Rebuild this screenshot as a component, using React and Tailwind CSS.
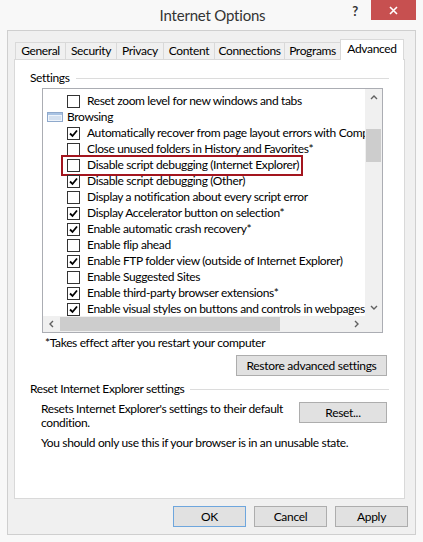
import { useState } from "react";

const ROWS = [
  { label: "Reset zoom level for new windows and tabs", checked: false },
  { label: "Browsing", group: true },
  { label: "Automatically recover from page layout errors with Compatibility View", checked: true },
  { label: "Close unused folders in History and Favorites*", checked: false },
  { label: "Disable script debugging (Internet Explorer)", checked: false, highlight: true },
  { label: "Disable script debugging (Other)", checked: true },
  { label: "Display a notification about every script error", checked: false },
  { label: "Display Accelerator button on selection*", checked: true },
  { label: "Enable automatic crash recovery*", checked: true },
  { label: "Enable flip ahead", checked: false },
  { label: "Enable FTP folder view (outside of Internet Explorer)", checked: true },
  { label: "Enable Suggested Sites", checked: false },
  { label: "Enable third-party browser extensions*", checked: true },
  { label: "Enable visual styles on buttons and controls in webpages", checked: true },
];

const TABS = [
  { label: "General", w: "w-[51px]" },
  { label: "Security", w: "w-[51px]" },
  { label: "Privacy", w: "w-[47px]" },
  { label: "Content", w: "w-[51px]" },
  { label: "Connections", w: "w-[70px]" },
  { label: "Programs", w: "w-[56px]" },
];

function Checkbox({ checked }) {
  return (
    <span className="w-[13px] h-[13px] shrink-0 border border-[#333] bg-white flex items-center justify-center">
      {checked && (
        <svg width="11" height="11" viewBox="0 0 11 11">
          <path d="M2 5.5 L4.5 8 L9 2.5" fill="none" stroke="#000" strokeWidth="1.8" />
        </svg>
      )}
    </span>
  );
}

function GroupIcon() {
  return (
    <svg width="16" height="10" viewBox="0 0 16 10" className="shrink-0">
      <rect x="0.5" y="0.5" width="15" height="9" fill="#eef4fb" stroke="#8fa9cc" />
      <rect x="1" y="1" width="14" height="2" fill="#a9c3e3" />
      <line x1="2" y1="5" x2="14" y2="5" stroke="#b9cce4" />
      <line x1="2" y1="7" x2="14" y2="7" stroke="#b9cce4" />
    </svg>
  );
}

function Chevron({ dir }) {
  const d = {
    up: "M1 5 L4 2 L7 5",
    down: "M1 2 L4 5 L7 2",
    left: "M5 1 L2 4 L5 7",
    right: "M2 1 L5 4 L2 7",
  }[dir];
  const vertical = dir === "up" || dir === "down";
  return (
    <svg width={vertical ? 8 : 7} height={vertical ? 7 : 8} viewBox={vertical ? "0 0 8 7" : "0 0 7 8"}>
      <path d={d} fill="none" stroke="#606060" strokeWidth="1.4" />
    </svg>
  );
}

function Button({ children, className = "", primary }) {
  return (
    <button
      className={`h-[21px] text-[12px] tracking-[-0.3px] text-black bg-[#e1e1e1] border ${primary ? "border-[#6ea6dd]" : "border-[#adadad]"} flex items-center justify-center ${className}`}
    >
      {children}
    </button>
  );
}

function GroupHeader({ label }) {
  return (
    <div className="flex items-center h-[16px] pl-[15px] pr-[15px] gap-[6px]">
      <span className="shrink-0">{label}</span>
      <span className="flex-1 h-px bg-[#dcdcdc]" />
    </div>
  );
}

export default function App() {
  const [tab] = useState("Advanced");

  return (
    <div className="w-[423px] h-[542px] bg-[#f8f8f8] font-['Segoe_UI','Lato',sans-serif] text-[12px] tracking-[-0.35px] text-black leading-[16px] flex flex-col overflow-hidden">
      {/* title bar */}
      <div className="h-[30px] flex items-start shrink-0">
        <div className="flex-1 pl-[78px] pt-[5px] text-center text-[15px] tracking-[-0.2px] leading-[20px] text-[#333]">Internet Options</div>
        <div className="w-[16px] pt-[3px] text-[13px] font-bold text-[#333] text-center mr-[8px]">?</div>
        <div className="w-[45px] h-[20px] bg-[#c75050] flex items-center justify-center mr-[7px]">
          <svg width="9" height="9" viewBox="0 0 9 9">
            <path d="M1 1 L8 8 M8 1 L1 8" stroke="#fff" strokeWidth="1.6" />
          </svg>
        </div>
      </div>

      {/* client area */}
      <div className="mx-[7px] h-[505px] border border-[#cfcfcf] bg-[#f0f0f0] flex flex-col px-[6px] pt-[7px]">
        {/* tabs */}
        <div className="flex items-end h-[21px] pl-[1px] relative z-10">
          {TABS.map((t, i) => (
            <div
              key={t.label}
              className={`${t.w} h-[17px] border-t border-r ${i === 0 ? "border-l" : ""} border-[#d9d9d9] bg-[#f0f0f0] flex items-center justify-center leading-[16px]`}
            >
              {t.label}
            </div>
          ))}
          <div className="w-[64px] h-[21px] -ml-px border-t border-l border-r border-[#d9d9d9] bg-white flex items-start justify-center pt-[1px] -mb-px">
            {tab}
          </div>
        </div>

        {/* panel */}
        <div className="w-[391px] h-[440px] border border-[#d9d9d9] bg-white flex flex-col">
          <div className="mt-[10px]">
            <GroupHeader label="Settings" />
          </div>

          {/* list box */}
          <div className="ml-[27px] mt-[2px] w-[341px] h-[245px] border border-[#abadb3] flex">
            <div className="w-[322px] flex flex-col">
              <div className="h-[227px] overflow-hidden pt-[4px]">
                {ROWS.map((r) =>
                  r.group ? (
                    <div key={r.label} className="h-[16px] flex items-center pl-[4px] gap-[4px] whitespace-nowrap">
                      <GroupIcon />
                      <span>{r.label}</span>
                    </div>
                  ) : (
                    <div key={r.label} className="h-[16px] flex items-center pl-[24px] gap-[7px] whitespace-nowrap relative">
                      <Checkbox checked={r.checked} />
                      <span>{r.label}</span>
                      {r.highlight && (
                        <span className="absolute left-[18px] top-[-2px] w-[242px] h-[21px] border-2 border-[#a3151e]" />
                      )}
                    </div>
                  )
                )}
              </div>
              {/* horizontal scrollbar */}
              <div className="h-[16px] bg-[#f0f0f0] flex items-center">
                <div className="w-[16px] flex items-center justify-center">
                  <Chevron dir="left" />
                </div>
                <div className="flex-1 h-full relative">
                  <div className="absolute left-[1px] top-[1px] bottom-[1px] w-[220px] bg-[#cdcdcd]" />
                </div>
                <div className="w-[17px] flex items-center justify-center">
                  <Chevron dir="right" />
                </div>
              </div>
            </div>
            {/* vertical scrollbar */}
            <div className="w-[17px] flex flex-col bg-[#f0f0f0]">
              <div className="h-[227px] flex flex-col">
                <div className="h-[17px] flex items-center justify-center">
                  <Chevron dir="up" />
                </div>
                <div className="flex-1 relative">
                  <div className="absolute left-[1px] right-[1px] top-[23px] h-[33px] bg-[#cdcdcd]" />
                </div>
                <div className="h-[17px] flex items-center justify-center">
                  <Chevron dir="down" />
                </div>
              </div>
              <div className="h-[16px] bg-[#f0f0f0]" />
            </div>
          </div>

          <div className="mt-[2px] pl-[30px]">*Takes effect after you restart your computer</div>

          <div className="mt-[4px] flex justify-end pr-[17px]">
            <Button className="w-[151px]">Restore advanced settings</Button>
          </div>

          <div className="mt-[5px]">
            <GroupHeader label="Reset Internet Explorer settings" />
          </div>

          <div className="mt-[4px] pl-[26px] pr-[17px] flex items-start justify-between">
            <p className="leading-[14px] w-[250px] pt-[1px]">Resets Internet Explorer's settings to their default condition.</p>
            <Button className="w-[88px] mt-[1px]">Reset...</Button>
          </div>

          <p className="mt-[5px] pl-[26px]">You should only use this if your browser is in an unusable state.</p>
        </div>

        {/* dialog buttons */}
        <div className="mt-[7px] flex justify-end gap-[8px] pr-[1px]">
          <Button className="w-[73px]" primary>OK</Button>
          <Button className="w-[73px]">Cancel</Button>
          <Button className="w-[73px]">Apply</Button>
        </div>
      </div>
    </div>
  );
}
